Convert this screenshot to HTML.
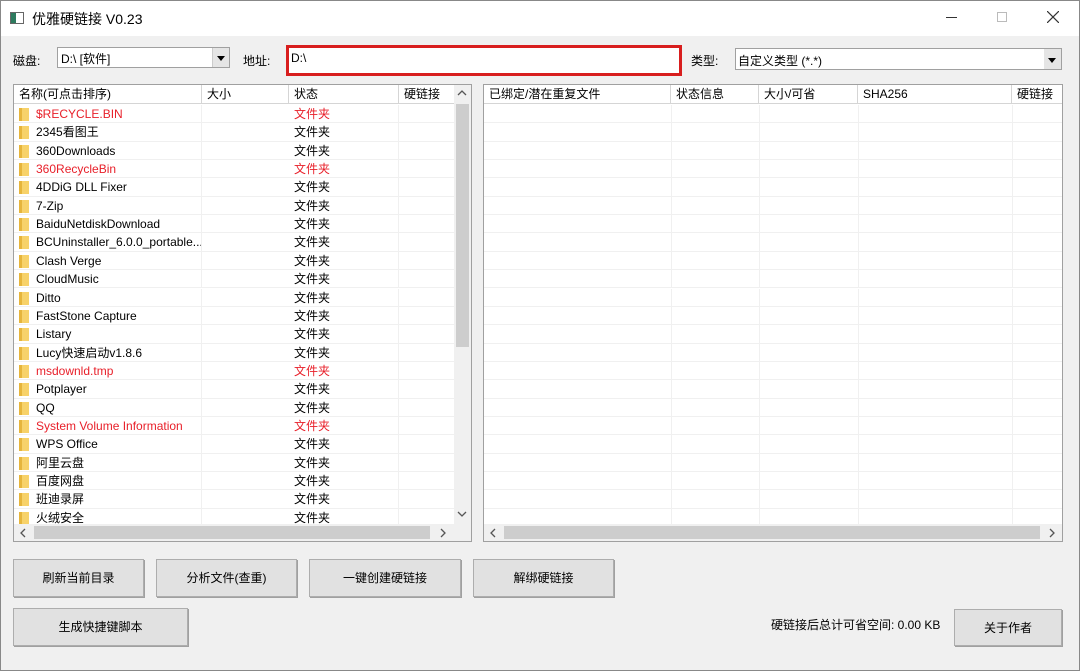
<!DOCTYPE html>
<html><head><meta charset="utf-8"><style>
*{box-sizing:border-box;margin:0;padding:0}
body{width:1080px;height:671px;overflow:hidden;background:#f0f0f0;font-family:"Liberation Sans","Noto Sans CJK SC",sans-serif;font-size:12px;color:#000;position:relative;border:1px solid #888}
.abs{position:absolute}
.title{left:0;top:0;width:1078px;height:35px;background:#fff}
.list{background:#fff;border:1px solid #a0a0a0;overflow:hidden}
.hdr{position:absolute;top:0;height:19px;border-right:1px solid #d5d5d5;border-bottom:1px solid #d5d5d5;padding-left:5px;line-height:18px;background:#fff}
.row{position:absolute;left:0;height:18.35px;line-height:18px;border-bottom:1px solid #f0f0f0;white-space:nowrap}
.red{color:#e8202a}
.btn{position:absolute;background:#e1e1e1;border:1px solid #adadad;box-shadow:1px 1px 0 #a0a0a0;text-align:center;font-size:12px}
.fold{position:absolute;left:5px;top:3px;width:10px;height:13px;background:linear-gradient(90deg,#e6b53c 0,#e6b53c 3px,#f7d26a 3px)}
.sb{background:#f0f0f0}
</style></head><body>
<div class="abs title">
 <div class="abs" style="left:9px;top:11px;width:14px;height:12px;border:1px solid #666;background:linear-gradient(90deg,#2d7a5e 0,#2d7a5e 5px,#fff 5px)"></div>
 <div class="abs" style="left:31px;top:8px;font-size:14px">优雅硬链接 V0.23</div>
 <div class="abs" style="left:945px;top:16px;width:11px;height:1px;background:#333"></div>
 <div class="abs" style="left:996px;top:11px;width:10px;height:10px;border:1px solid #bbb"></div>
 <svg class="abs" style="left:1046px;top:10px" width="12" height="12"><path d="M0 0L12 12M12 0L0 12" stroke="#333" stroke-width="1.2"/></svg>
</div>
<div class="abs" style="left:12px;top:51px">磁盘:</div>
<div class="abs" style="left:56px;top:46px;width:173px;height:21px;background:#fff;border:1px solid #a0a0a0;padding:2px 3px">D:\ [软件]</div>
<div class="abs" style="left:211px;top:47px;width:17px;height:19px;background:#e5e5e5;border-left:1px solid #ccc"><svg width="17" height="19"><path d="M4 8h8l-4 5z" fill="#000"/></svg></div>
<div class="abs" style="left:242px;top:51px">地址:</div>
<div class="abs" style="left:285px;top:44px;width:396px;height:31px;border:3px solid #d81e1e;background:#fff;padding:3px 2px">D:\</div>
<div class="abs" style="left:690px;top:51px">类型:</div>
<div class="abs" style="left:734px;top:47px;width:327px;height:22px;background:#fff;border:1px solid #a0a0a0;padding:3px 2px">自定义类型 (*.*)</div>
<div class="abs" style="left:1043px;top:48px;width:17px;height:20px;background:#e5e5e5"><svg width="17" height="20"><path d="M4 9h8l-4 5z" fill="#000"/></svg></div>

<div class="abs list" style="left:12px;top:83px;width:459px;height:458px">
 <div class="hdr" style="left:0;width:188px">名称(可点击排序)</div>
 <div class="hdr" style="left:188px;width:87px">大小</div>
 <div class="hdr" style="left:275px;width:110px">状态</div>
 <div class="hdr" style="left:385px;width:56px">硬链接</div>
 <div id="rows"></div>
 <div class="abs sb" style="left:440px;top:0;width:17px;height:440px"><div class="abs" style="left:2px;top:19px;width:13px;height:243px;background:#cdcdcd"></div>
  <svg class="abs" style="left:3px;top:4px" width="10" height="8"><path d="M1 6l4-4 4 4" stroke="#555" fill="none" stroke-width="1.3"/></svg>
  <svg class="abs" style="left:3px;top:425px" width="10" height="8"><path d="M1 2l4 4 4-4" stroke="#555" fill="none" stroke-width="1.3"/></svg></div>
 <div class="abs sb" style="left:0;top:439px;width:457px;height:17px"><div class="abs" style="left:20px;top:2px;width:396px;height:13px;background:#cdcdcd"></div>
  <svg class="abs" style="left:5px;top:4px" width="8" height="10"><path d="M6 1L2 5l4 4" stroke="#555" fill="none" stroke-width="1.3"/></svg>
  <svg class="abs" style="left:425px;top:4px" width="8" height="10"><path d="M2 1l4 4-4 4" stroke="#555" fill="none" stroke-width="1.3"/></svg></div>
</div>

<div class="abs list" style="left:482px;top:83px;width:580px;height:458px">
 <div class="hdr" style="left:0;width:187px">已绑定/潜在重复文件</div>
 <div class="hdr" style="left:187px;width:88px">状态信息</div>
 <div class="hdr" style="left:275px;width:99px">大小/可省</div>
 <div class="hdr" style="left:374px;width:154px">SHA256</div>
 <div class="hdr" style="left:528px;width:60px">硬链接</div>
 <div id="rows2"></div>
 <div class="abs sb" style="left:0;top:439px;width:578px;height:17px"><div class="abs" style="left:20px;top:2px;width:536px;height:13px;background:#cdcdcd"></div>
  <svg class="abs" style="left:5px;top:4px" width="8" height="10"><path d="M6 1L2 5l4 4" stroke="#555" fill="none" stroke-width="1.3"/></svg>
  <svg class="abs" style="left:564px;top:4px" width="8" height="10"><path d="M2 1l4 4-4 4" stroke="#555" fill="none" stroke-width="1.3"/></svg></div>
</div>

<div class="btn" style="left:12px;top:558px;width:131px;height:38px;line-height:36px">刷新当前目录</div>
<div class="btn" style="left:155px;top:558px;width:141px;height:38px;line-height:36px">分析文件(查重)</div>
<div class="btn" style="left:308px;top:558px;width:152px;height:38px;line-height:36px">一键创建硬链接</div>
<div class="btn" style="left:472px;top:558px;width:141px;height:38px;line-height:36px">解绑硬链接</div>
<div class="btn" style="left:12px;top:607px;width:175px;height:38px;line-height:36px">生成快捷键脚本</div>
<div class="abs" style="left:770px;top:615px">硬链接后总计可省空间: 0.00 KB</div>
<div class="btn" style="left:953px;top:608px;width:108px;height:37px;line-height:36px">关于作者</div>

<script>
var d=[["$RECYCLE.BIN",1],["2345看图王"],["360Downloads"],["360RecycleBin",1],["4DDiG DLL Fixer"],["7-Zip"],["BaiduNetdiskDownload"],["BCUninstaller_6.0.0_portable..."],["Clash Verge"],["CloudMusic"],["Ditto"],["FastStone Capture"],["Listary"],["Lucy快速启动v1.8.6"],["msdownld.tmp",1],["Potplayer"],["QQ"],["System Volume Information",1],["WPS Office"],["阿里云盘"],["百度网盘"],["班迪录屏"],["火绒安全"]];
var h="";d.forEach(function(r,i){var t=20+i*18.35,c=r[1]?' red':'';
h+='<div class="row'+c+'" style="top:'+t+'px;width:440px"><span class="fold"></span><span style="position:absolute;left:22px">'+r[0]+'</span><span style="position:absolute;left:280px">文件夹</span>'+
'<span style="position:absolute;left:187px;top:0;width:1px;height:18px;background:#f0f0f0"></span><span style="position:absolute;left:384px;top:0;width:1px;height:18px;background:#f0f0f0"></span></div>';});
document.getElementById("rows").innerHTML=h;
var g="";for(var i=0;i<23;i++){var t=20+i*18.35;g+='<div class="row" style="top:'+t+'px;width:578px">'+[187,275,374,528].map(function(x){return '<span style="position:absolute;left:'+x+'px;top:0;width:1px;height:18px;background:#f0f0f0"></span>'}).join('')+'</div>';}
document.getElementById("rows2").innerHTML=g;
</script>
</body></html>
